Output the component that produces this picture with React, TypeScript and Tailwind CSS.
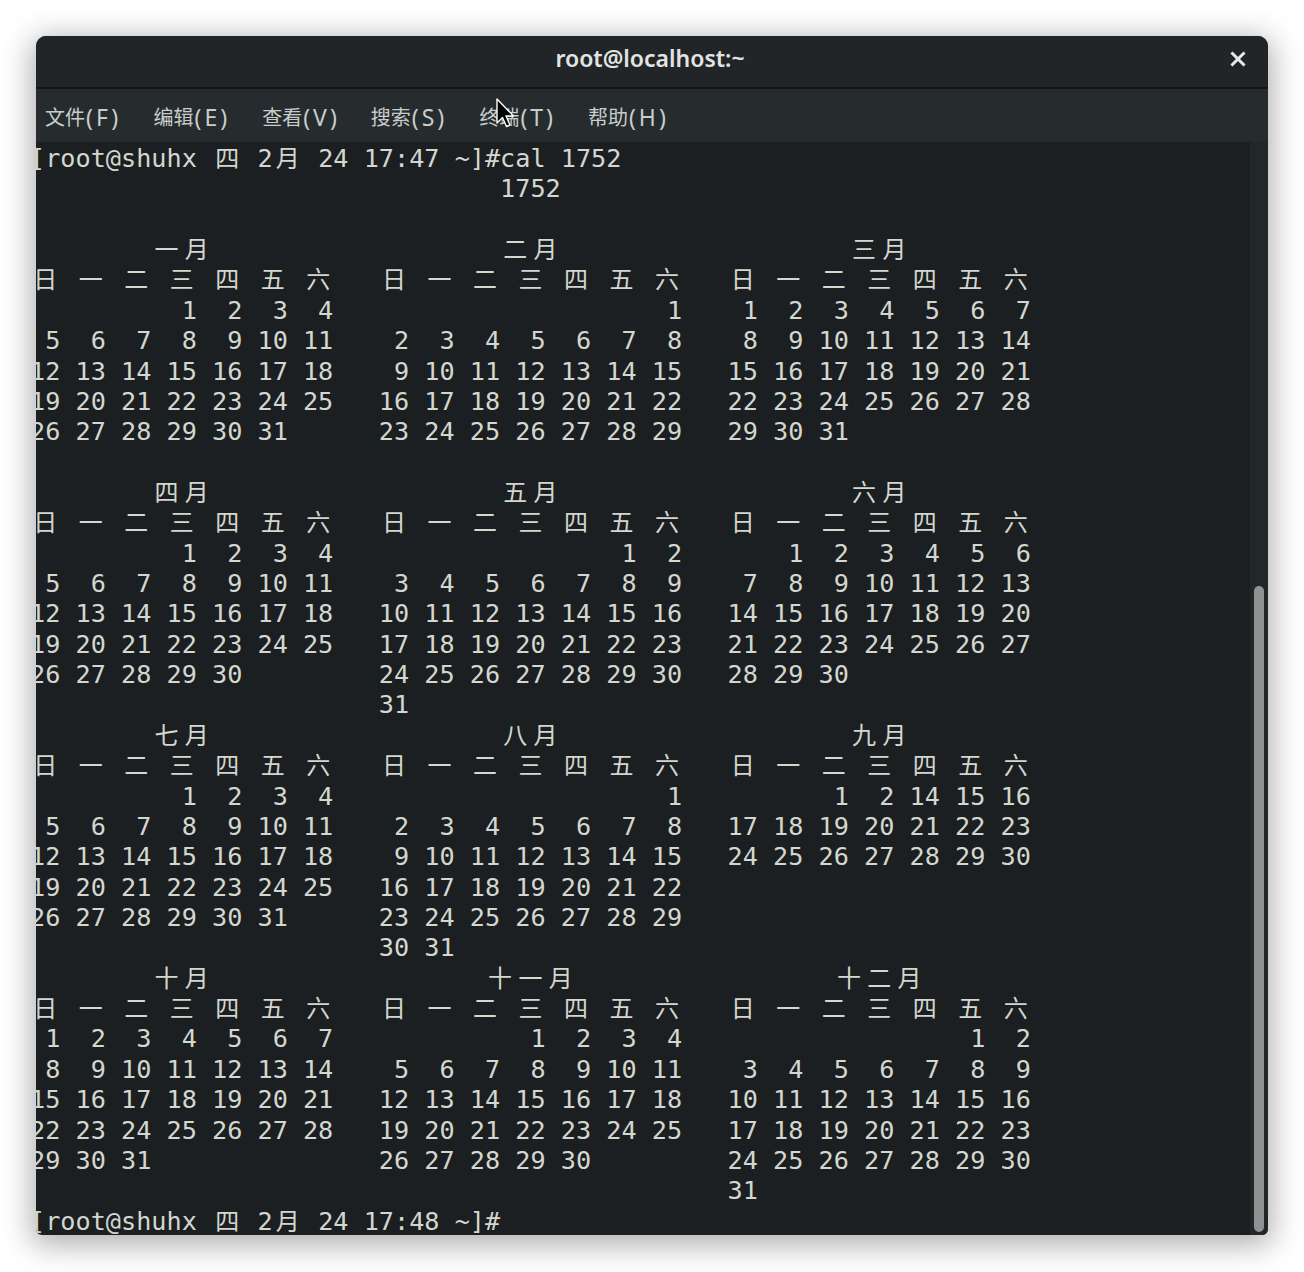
import React from 'react'

const isWide = (ch: string) => ch.charCodeAt(0) > 0x2e7f

const cellLen = (s: string) => {
  let n = 0
  for (const ch of s) n += isWide(ch) ? 2 : 1
  return n
}

const padCells = (s: string, n: number) => s + ' '.repeat(Math.max(0, n - cellLen(s)))

type Month = { name: string; start: number; days: number[] }

const range = (a: number, b: number) => Array.from({ length: b - a + 1 }, (_, i) => a + i)

const months: Month[] = [
  { name: '一月', start: 3, days: range(1, 31) },
  { name: '二月', start: 6, days: range(1, 29) },
  { name: '三月', start: 0, days: range(1, 31) },
  { name: '四月', start: 3, days: range(1, 30) },
  { name: '五月', start: 5, days: range(1, 31) },
  { name: '六月', start: 1, days: range(1, 30) },
  { name: '七月', start: 3, days: range(1, 31) },
  { name: '八月', start: 6, days: range(1, 31) },
  { name: '九月', start: 2, days: [1, 2, ...range(14, 30)] },
  { name: '十月', start: 0, days: range(1, 31) },
  { name: '十一月', start: 3, days: range(1, 30) },
  { name: '十二月', start: 5, days: range(1, 31) },
]

const weekHeader = '日 一 二 三 四 五 六'

// six rows of 20 cells for one month
const monthRows = (m: Month) => {
  const cells: string[] = Array(m.start).fill('  ')
  m.days.forEach((d) => cells.push(String(d).padStart(2, ' ')))
  while (cells.length < 42) cells.push('  ')
  const rows: string[] = []
  for (let r = 0; r < 6; r++) rows.push(cells.slice(r * 7, r * 7 + 7).join(' '))
  return rows
}

const buildLines = () => {
  const lines: string[] = []
  lines.push('[root@shuhx 四 2月 24 17:47 ~]#cal 1752')
  lines.push(' '.repeat(31) + '1752')
  lines.push('')
  for (let q = 0; q < 4; q++) {
    const trio = months.slice(q * 3, q * 3 + 3)
    lines.push(
      trio
        .map((m) => padCells(' '.repeat(Math.floor((20 - cellLen(m.name)) / 2)) + m.name, 20))
        .join('   ')
    )
    lines.push([weekHeader, weekHeader, weekHeader].join('   '))
    const grids = trio.map(monthRows)
    for (let r = 0; r < 6; r++) lines.push(grids.map((g) => g[r]).join('   '))
  }
  lines.push('[root@shuhx 四 2月 24 17:48 ~]#')
  return lines
}

const TermLine: React.FC<{ text: string }> = ({ text }) => {
  const parts: React.ReactNode[] = []
  let buf = ''
  let k = 0
  const flush = () => {
    if (buf) parts.push(<span key={k++} className="pt-[4px] leading-[26.37px]">{buf}</span>)
    buf = ''
  }
  for (const ch of text) {
    if (isWide(ch)) {
      flush()
      parts.push(
        <span
          key={k++}
          className="w-[30.34px] shrink-0 text-center font-['Noto_Sans_CJK_SC',sans-serif] text-[24px]"
        >
          {ch}
        </span>
      )
    } else {
      buf += ch
    }
  }
  flush()
  return <div className="flex h-[30.37px] whitespace-pre">{parts}</div>
}

const menu = [
  ['文件', '(F)'],
  ['编辑', '(E)'],
  ['查看', '(V)'],
  ['搜索', '(S)'],
  ['终端', '(T)'],
  ['帮助', '(H)'],
]

export default function App() {
  const lines = buildLines()

  return (
    <div className="w-[1304px] h-[1272px] bg-white pt-[36px] pl-[36px]">
      <div className="relative w-[1232px] h-[1199px] flex flex-col overflow-hidden rounded-t-[10px] rounded-b-[6px] bg-[#1c1f21] shadow-[0_6px_30px_4px_rgba(0,0,0,0.32)]">
        {/* title bar */}
        <div className="relative h-[51px] shrink-0 bg-[#212527] flex items-center justify-center pb-[6px]">
          <span className="font-['Noto_Sans',sans-serif] font-semibold text-[23px] text-[#e2e4e4] pr-[4px]">
            root@localhost:~
          </span>
          <svg
            className="absolute right-[22px] top-[15px]"
            width="16"
            height="16"
            viewBox="0 0 16 16"
          >
            <path d="M2.5 2.5 L13.5 13.5 M13.5 2.5 L2.5 13.5" stroke="#e8e8e8" strokeWidth="3" strokeLinecap="square" />
          </svg>
        </div>
        <div className="h-[2px] shrink-0 bg-[#131517]" />

        {/* menu bar */}
        <div className="relative h-[53px] shrink-0 bg-[#262c2e] flex items-center gap-[28.6px] pl-[9px] pt-[3px]">
          {menu.map(([zh, key]) => (
            <span key={zh} className="w-[80px] flex items-center text-[#c9cccc] whitespace-nowrap">
              <span className="font-['Noto_Sans_CJK_SC',sans-serif] text-[20px]">{zh}</span>
              <span className="font-['Noto_Sans',sans-serif] text-[23px] tracking-[3px] pl-[1px]">{key}</span>
            </span>
          ))}
          {/* mouse pointer */}
          <svg className="absolute left-[459px] top-[9px]" width="20" height="32" viewBox="0 0 20 32">
            <path
              d="M2 1 L2 25 L7.5 19.5 L11.5 28.5 L15 27 L11 18 L18.5 18 Z"
              fill="#000"
              stroke="#fff"
              strokeWidth="1.4"
              strokeLinejoin="round"
            />
          </svg>
        </div>

        {/* terminal */}
        <div className="flex flex-1 min-h-0">
          <div className="flex-1 overflow-hidden">
            <div className="-ml-[6px] font-['DejaVu_Sans_Mono',monospace] text-[25.2px] leading-[30.37px] text-[#d3d7cf]">
              {lines.map((l, i) => (
                <TermLine key={i} text={l} />
              ))}
            </div>
          </div>
          <div className="w-[18px] shrink-0 bg-[#22272a] flex flex-col justify-end pb-[3px] pl-[4px]">
            <div className="w-[10px] h-[646px] rounded-full bg-[#8f9493]" />
          </div>
        </div>
      </div>
    </div>
  )
}
